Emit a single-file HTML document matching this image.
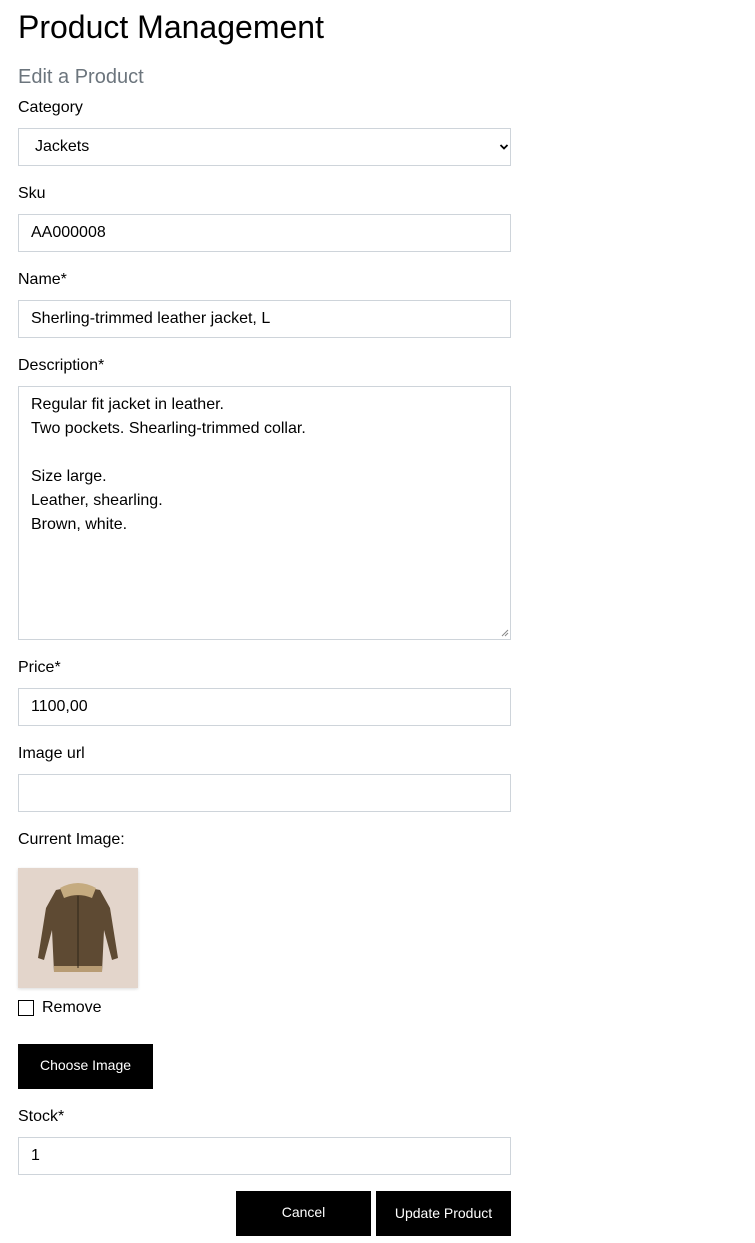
<!DOCTYPE html>
<html><head><meta charset="utf-8"><style>
body{margin:0;background:#fff;font-family:"Liberation Sans",Arial,sans-serif;color:#000;width:755px;height:1243px;position:relative;overflow:hidden}
.a{position:absolute}
.l{position:absolute;left:18px;font-size:16px;line-height:20px}
.i{position:absolute;left:18px;width:491px;height:36px;border:1px solid #ced4da;background:#fff;font-size:16px;line-height:36px;box-sizing:content-box}
.i span{position:absolute;left:12px}
.b{position:absolute;background:#000;color:#fff;font-size:14px;text-align:center;line-height:45px;height:45px}
</style></head><body>
<div class="a" style="left:18px;top:8px;font-size:32px;line-height:38px">Product Management</div>
<div class="a" style="left:18px;top:65px;font-size:20px;line-height:24px;color:#6c757d">Edit a Product</div>
<div class="l" style="top:98px">Category</div>
<div class="i" style="top:128px"><span style="left:16px">Jackets</span>
<svg class="a" style="left:480px;top:14px" width="10" height="8" viewBox="0 0 10 8"><path d="M1.5 2 L5 5.5 L8.5 2" fill="none" stroke="#000" stroke-width="1.8"/></svg></div>
<div class="l" style="top:184px">Sku</div>
<div class="i" style="top:214px"><span>AA000008</span></div>
<div class="l" style="top:270px">Name*</div>
<div class="i" style="top:300px"><span>Sherling-trimmed leather jacket, L</span></div>
<div class="l" style="top:356px">Description*</div>
<div class="i" style="top:386px;height:252px;line-height:24px"><div class="a" style="left:12px;top:6px">Regular fit jacket in leather.<br>Two pockets. Shearling-trimmed collar.<br><br>Size large.<br>Leather, shearling.<br>Brown, white.</div>
<svg class="a" style="left:482px;top:242px" width="8" height="8"><path d="M1 7L7 1M4 7L7 4" stroke="#888" stroke-width="1"/></svg></div>
<div class="l" style="top:658px">Price*</div>
<div class="i" style="top:688px"><span>1100,00</span></div>
<div class="l" style="top:744px">Image url</div>
<div class="i" style="top:774px"></div>
<div class="l" style="top:830px">Current Image:</div>
<svg class="a" style="left:18px;top:868px;box-shadow:0 1px 3px rgba(0,0,0,.15)" width="120" height="120" viewBox="0 0 120 120">
<rect width="120" height="120" fill="#e3d5cb"/>
<path d="M38 22 L58 18 L62 18 L82 22 L92 40 L100 90 L94 92 L86 62 L84 104 L36 104 L34 62 L26 92 L20 90 L28 40 Z" fill="#5e4a33"/>
<path d="M42 20 Q60 10 78 20 L74 30 Q60 24 46 30 Z" fill="#c5ab80"/>
<rect x="36" y="98" width="48" height="6" fill="#b89c74"/>
<line x1="60" y1="28" x2="60" y2="100" stroke="#2f2518" stroke-width="1"/>
</svg>
<div class="a" style="left:18px;top:1000px;width:14px;height:14px;border:1px solid #000"></div>
<div class="a" style="left:42px;top:998px;font-size:16px;line-height:20px">Remove</div>
<div class="b" style="left:18px;top:1044px;width:135px;line-height:43px">Choose Image</div>
<div class="l" style="top:1107px">Stock*</div>
<div class="i" style="top:1137px"><span>1</span></div>
<div class="b" style="left:236px;top:1191px;width:135px;line-height:42px">Cancel</div>
<div class="b" style="left:376px;top:1191px;width:135px">Update Product</div>
</body></html>
